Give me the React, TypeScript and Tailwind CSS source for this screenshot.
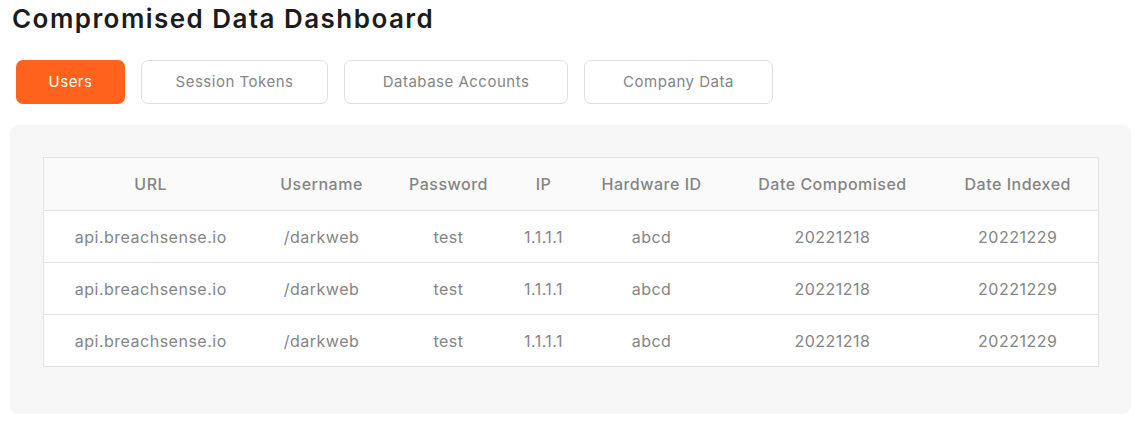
import React from "react";

const tabs = ["Users", "Session Tokens", "Database Accounts", "Company Data"];
const tabWidths = ["w-[109px]", "w-[187px]", "w-[224px]", "w-[189px]"];
const cols = [
  { name: "URL", w: "w-[214px]" },
  { name: "Username", w: "w-[128px]" },
  { name: "Password", w: "w-[126px]" },
  { name: "IP", w: "w-[64px]" },
  { name: "Hardware ID", w: "w-[152px]" },
  { name: "Date Compomised", w: "w-[210px]" },
  { name: "Date Indexed", w: "w-[161px]" },
];
const row = ["api.breachsense.io", "/darkweb", "test", "1.1.1.1", "abcd", "20221218", "20221229"];

export default function App() {
  return (
    <div className="w-[1138px] h-[423px] bg-white font-['Inter','Open_Sans',sans-serif]">
      <div className="pl-[12px] pt-[1px]">
        <h1 className="text-[26px] leading-[36px] font-semibold text-[#1c1c1c] tracking-[1.45px]">
          Compromised Data Dashboard
        </h1>
      </div>
      <div className="flex gap-[16px] pl-[16px] mt-[23px]">
        {tabs.map((t, i) => (
          <div
            key={t}
            className={`${tabWidths[i]} h-[44px] flex items-center justify-center rounded-[7px] text-[15px] tracking-[0.5px] ${
              i === 0
                ? "bg-[#ff621c] text-white"
                : "bg-white border border-[#dedede] text-[#858585]"
            }`}
          >
            {t}
          </div>
        ))}
      </div>
      <div className="mt-[21px] ml-[10px] w-[1121px] h-[289px] bg-[#f7f7f7] rounded-[8px] pt-[32px] pl-[33px]">
        <table className="w-[1056px] border-collapse table-fixed bg-white text-[16px] text-[#858585] tracking-[0.5px]">
          <thead>
            <tr className="bg-[#fafafa] h-[53px]">
              {cols.map((c) => (
                <th key={c.name} className={`${c.w} border border-[#e2e2e2] border-x-0 first:border-l last:border-r font-medium text-[16px] text-center`}>
                  {c.name}
                </th>
              ))}
            </tr>
          </thead>
          <tbody>
            {[0, 1, 2].map((r) => (
              <tr key={r} className="h-[52px]">
                {row.map((v, j) => (
                  <td key={j} className="border border-[#e2e2e2] border-x-0 first:border-l last:border-r text-center">
                    {v}
                  </td>
                ))}
              </tr>
            ))}
          </tbody>
        </table>
      </div>
    </div>
  );
}
